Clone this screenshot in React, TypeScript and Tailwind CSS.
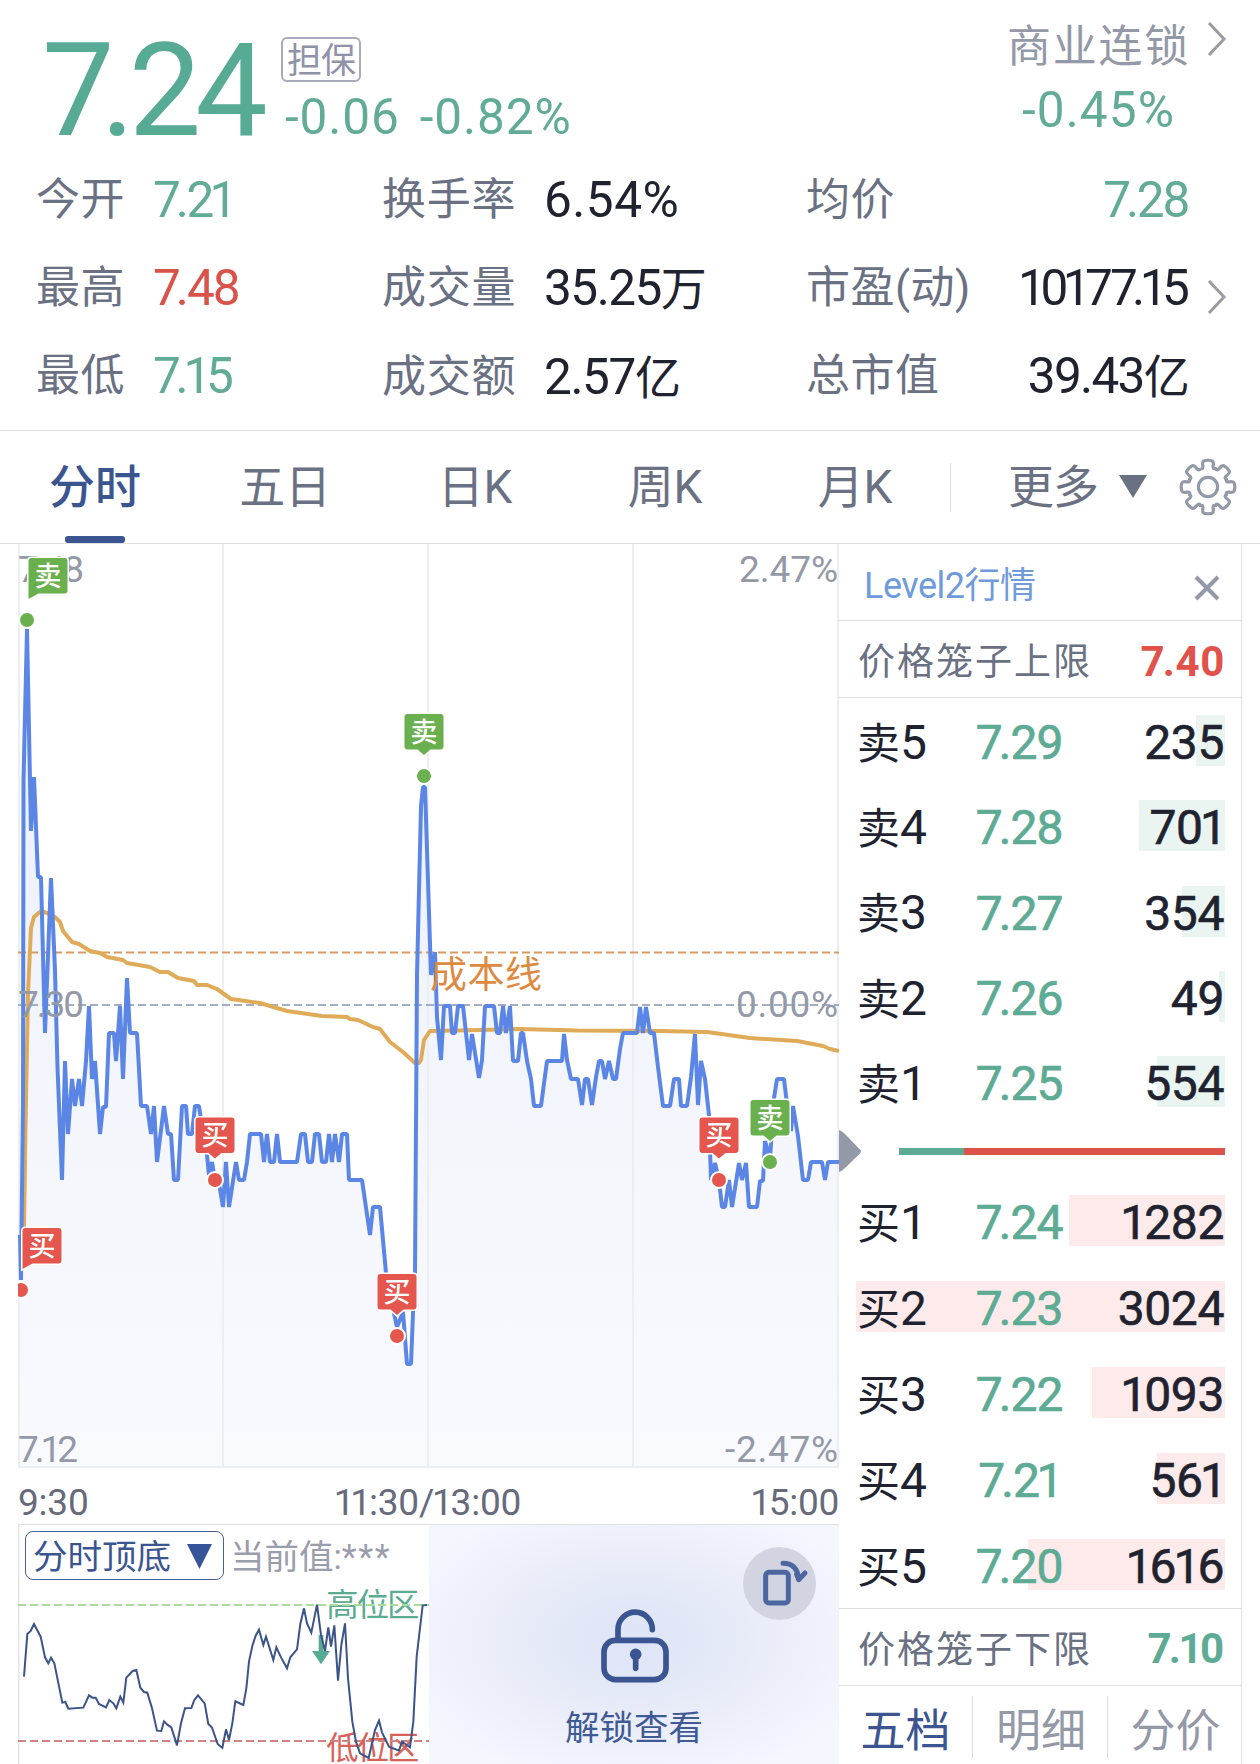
import React from "react";

type Side = "sell" | "buy";

interface Quote {
  label: string;
  price: string;
  volume: number;
}

interface Marker {
  side: Side;
  x: number;
  y: number;
  dotX: number;
  dotY: number;
  tail: "left" | "center";
}

const MAX_VOLUME = 3024;

const sells: Quote[] = [
  { label: "卖5", price: "7.29", volume: 235 },
  { label: "卖4", price: "7.28", volume: 701 },
  { label: "卖3", price: "7.27", volume: 354 },
  { label: "卖2", price: "7.26", volume: 49 },
  { label: "卖1", price: "7.25", volume: 554 },
];

const buys: Quote[] = [
  { label: "买1", price: "7.24", volume: 1282 },
  { label: "买2", price: "7.23", volume: 3024 },
  { label: "买3", price: "7.22", volume: 1093 },
  { label: "买4", price: "7.21", volume: 561 },
  { label: "买5", price: "7.20", volume: 1616 },
];

const tabs = ["分时", "五日", "日K", "周K", "月K"];

const markers: Marker[] = [
  { side: "sell", x: 28.5, y: 558, dotX: 27, dotY: 620, tail: "left" },
  { side: "buy", x: 22.5, y: 1228, dotX: 21, dotY: 1290, tail: "left" },
  { side: "buy", x: 195.5, y: 1117.5, dotX: 215, dotY: 1180, tail: "center" },
  { side: "buy", x: 377.5, y: 1274, dotX: 397, dotY: 1336, tail: "center" },
  { side: "sell", x: 404.5, y: 714, dotX: 424, dotY: 776, tail: "center" },
  { side: "buy", x: 699.5, y: 1117.5, dotX: 719, dotY: 1180, tail: "center" },
  { side: "sell", x: 750.5, y: 1100, dotX: 770, dotY: 1162, tail: "center" },
];

const priceLine =
  "20,1235 21,1280 23,1100 23.5,780 27,629 31,831 34,777 38,877 41,877 45,1033 51,878 55,970 57.5,1067 62,1180 65,1061 68,1134 72,1079 75,1106 79,1079 82,1106 86,1061 89,1006 92,1079 95,1061 100,1134 103,1107 106,1107 109,1033 114,1033 116,1061 120,1006 123,1079 127,978 130,1033 137,1033 141,1106 147,1106 151,1134 154,1106 157,1162 164,1106 168,1134 171,1134 174,1180 178,1180 182,1106 186,1106 188,1134 192,1134 195,1106 199,1106 203,1134 207,1155 209,1175 212,1162 215,1180 219,1183 223,1207 226,1162 229,1207 236,1162 239,1180 244,1180 247,1162 250,1134 261,1134 264,1162 267,1134 270,1162 274,1162 277,1134 280,1162 297,1162 301,1134 305,1134 308,1162 312,1162 315,1134 319,1134 322,1162 326,1162 329,1134 332,1162 335,1134 339,1162 342,1134 347,1134 349,1180 362,1180 370,1235 373,1207 380,1207 383,1240 386,1273 394,1313 397,1327 403,1312 407,1364 411,1364 413,1313 415,1273 417,975 421,806 423,787 425,787 431,975 435,952 437,1017 441,1060 444,1006 450,1006 452,1033 455,1033 458,1006 463,1006 469,1060 472,1034 479,1078 482,1060 485,1006 494,1006 497,1033 500,1033 503,1006 506,1033 510,1006 513,1061 518,1061 521,1033 523,1033 527,1061 531,1079 534,1106 541,1106 547,1061 562,1061 564,1034 567,1060 571,1079 578,1079 582,1105 585,1079 588,1079 592,1105 596,1077 599,1061 602,1061 605,1079 609,1061 613,1079 616,1079 620,1049 623,1033 637,1033 640,1007 643,1033 646,1007 650,1033 654,1033 658,1067 663,1106 670,1106 674,1079 679,1079 681,1106 687,1106 691,1077 695,1034 698,1105 701,1061 705,1079 709,1115 711,1180 715,1163 719,1180 722,1207 725,1207 729,1180 732,1207 739,1163 742,1180 746,1163 749,1207 757,1207 760,1181 763,1181 765,1141 770,1159 774,1098 777,1079 784,1079 787,1104 791,1131 793,1106 798,1136 803,1180 808,1180 811,1162 822,1162 825,1180 828,1162 839,1162";

const averageLine =
  "23,1235 24,1227 25.5,1127 28,993 31,928 34,917 41,911 47,913 55,917 60,922 63,931 72,942 79,944 90,951 100,953 107,957 123,960 127,963 150,967 160,972 168,972 178,978 194,981 197,985 207,985 217,989 231,999 260,1003 287,1011 322,1016 347,1017 350,1019 358,1020 373,1027 380,1029 390,1042 403,1052 415,1063 419,1063 421,1060 424,1040 430,1031 480,1030 520,1029 577,1030.6 660,1031 707,1032 750,1038 797,1041 823,1046 830,1049 839,1051";

const indicatorLine =
  "72,980 82,852 92,843 102,822 122,860 135,922 145,940 153,923 163,940 187,1058 196,1056 205,1076 250,1073 267,1036 277,1043 287,1043 297,1062 318,1072 328,1050 340,1060 349,1075 361,1040 370,1058 379,983 398,963 409,960 421,1013 432,1026 442,1028 456,1075 471,1142 484,1143 492,1114 502,1124 514,1132 531,1186 543,1120 555,1075 574,1074 583,1050 594,1036 614,1060 625,1122 636,1133 653,1182 667,1194 678,1138 687,1170 697,1120 706,1054 730,1065 739,1015 747,935 757,888 767,857 777,839 790,885 798,860 820,930 829,892 842,920 861,955 871,922 891,898 901,822 912,775 921,820 934,848 951,764 963,855 975,903 985,832 993,890 1003,826 1014,992 1024,885 1035,820 1044,985 1057,1115 1068,1175 1080,1210 1106,1224 1125,1140 1137,1112 1146,1147 1167,1190 1197,1202 1206,1175 1220,1185 1230,1192 1240,1115 1250,920 1268,766 1281,765";

// eight-toothed outline for the settings icon
const gearPath = Array.from({ length: 8 }, (_, i) => {
  const point = (deg: number, r: number) => {
    const a = ((i * 45 + deg) * Math.PI) / 180;
    return `${(30 + r * Math.sin(a)).toFixed(2)} ${(30 - r * Math.cos(a)).toFixed(2)}`;
  };
  const start = i === 0 ? `M${point(-22.5, 20)}` : "";
  return `${start} Q${point(-15, 18)} ${point(-13.5, 22)} C${point(-13, 27.5)} ${point(-7, 26.8)} ${point(0, 26.8)} C${point(7, 26.8)} ${point(13, 27.5)} ${point(13.5, 22)} Q${point(15, 18)} ${point(22.5, 20)}`;
}).join("");

function Chevron() {
  return (
    <svg width="20" height="36" viewBox="0 0 20 36" fill="none" stroke="#9b9ba1" strokeWidth="3">
      <path d="M2 2 L17 18 L2 34" />
    </svg>
  );
}

// Ones are set narrower than the other digits and the dot tucks under a seven
function Num({ value, className = "" }: { value: string; className?: string }) {
  return (
    <span className={className}>
      {value.split("").map((c, i) => {
        if (c === "1") {
          return (
            <span key={i} className="mx-[-0.055em]">
              1
            </span>
          );
        }
        if (c === "7" && value[i + 1] === ".") {
          return (
            <span key={i} className="mr-[-0.06em]">
              7
            </span>
          );
        }
        return c;
      })}
    </span>
  );
}

function QuoteHeader() {
  return (
    <header className="h-[431px] border-b border-[#dcdde0]">
      <div className="flex h-[156px] justify-between">
        <div className="flex pl-[42px]">
          <Num value="7.24" className="mt-[24.5px] h-[132px] w-[239px] text-[129px] leading-[132px] tracking-[-6px] text-[#57ab94]" />
          <div className="pt-[37px]">
            <div className="flex h-[45px] w-[80px] items-center justify-center rounded-md border-2 border-[#a9abbd] pt-[3px] text-[35px] leading-none tracking-[-1px] text-[#8f92a8]">
              担保
            </div>
            <div className="mt-[5px] ml-[4px] flex gap-[20px] text-[49.5px] leading-[60px] tracking-[0.9px] text-[#62ab97]">
              <span>-0.06</span>
              <span>-0.82%</span>
            </div>
          </div>
        </div>
        <div className="flex pt-[20px] pr-[33px]">
          <div className="w-[200px] text-right">
            <div className="pr-[19px] text-[44px] leading-[54px] tracking-[1.8px] whitespace-nowrap text-[#9499a8]">
              商业连锁
            </div>
            <div className="mt-[6px] pr-[32px] text-[49.5px] leading-[60px] tracking-[1.1px] text-[#62ab97]">-0.45%</div>
          </div>
          <div className="mt-[1px]">
            <Chevron />
          </div>
        </div>
      </div>

      <div className="grid grid-cols-[346px_424px_382px_1fr] pl-[36px] text-[49.5px] leading-[88px] text-[#20232f]">
        <div>
          <div className="flex">
            <span className="w-[117px] text-[44px] tracking-[0.5px] text-[#6a7183]">今开</span>
            <Num value="7.21" className="tracking-[-2.2px] text-[#62ab97]" />
          </div>
          <div className="flex">
            <span className="w-[117px] text-[44px] tracking-[0.5px] text-[#6a7183]">最高</span>
            <Num value="7.48" className="tracking-[-2px] text-[#d8534a]" />
          </div>
          <div className="flex">
            <span className="w-[117px] text-[44px] tracking-[0.5px] text-[#6a7183]">最低</span>
            <Num value="7.15" className="tracking-[-2.4px] text-[#62ab97]" />
          </div>
        </div>
        <div>
          <div className="flex">
            <span className="w-[162px] text-[44px] tracking-[0.7px] text-[#6a7183]">换手率</span>
            <span className="tracking-[0.5px]">6.54%</span>
          </div>
          <div className="flex">
            <span className="w-[162px] text-[44px] tracking-[0.7px] text-[#6a7183]">成交量</span>
            <span className="tracking-[-1.5px]">
              35.25<span className="text-[46px]">万</span>
            </span>
          </div>
          <div className="flex">
            <span className="w-[162px] text-[44px] tracking-[0.7px] text-[#6a7183]">成交额</span>
            <span className="tracking-[-1.4px]">
              2.57<span className="text-[46px]">亿</span>
            </span>
          </div>
        </div>
        <div>
          <div className="flex justify-between">
            <span className="text-[44px] tracking-[0.5px] text-[#6a7183]">均价</span>
            <Num value="7.28" className="tracking-[-2.2px] text-[#62ab97]" />
          </div>
          <div className="flex justify-between">
            <span className="text-[44px] tracking-[0.5px] text-[#6a7183]">市盈(动)</span>
            <Num value="10177.15" className="pr-px tracking-[-2.8px]" />
          </div>
          <div className="flex justify-between">
            <span className="text-[44px] tracking-[0.5px] text-[#6a7183]">总市值</span>
            <span className="tracking-[-1.7px]">
              39.43<span className="text-[46px]">亿</span>
            </span>
          </div>
        </div>
        <div className="pt-[123px] pl-[19px]">
          <Chevron />
        </div>
      </div>
    </header>
  );
}

function PeriodTabs() {
  return (
    <nav className="flex h-[113px] border-b border-[#dfe1e5] text-[46px] leading-[113px] text-[#6a7183]">
      {tabs.map((tab, i) => (
        <div key={tab} className="flex w-[190px] flex-col items-center">
          <span className={i === 0 ? "font-medium text-[#3a5590]" : "tracking-[-0.3px]"}>{tab}</span>
          {i === 0 && <span className="-mt-[8px] h-[7px] w-[60px] shrink-0 rounded-[3px] bg-[#3a5590]" />}
        </div>
      ))}
      <div className="mt-[32px] h-[49px] w-px bg-[#dddee2]" />
      <span className="ml-[57px] w-[92px] tracking-[-1px]">更多</span>
      <svg className="mt-[44px] ml-[19px]" width="28" height="24" viewBox="0 0 28 24">
        <path d="M0 0H28L14 23Z" fill="#6a7183" />
      </svg>
      <svg className="mt-[26px] ml-[31px]" width="60" height="60" viewBox="0 0 60 60" fill="none" stroke="#9499a8" strokeWidth="3.2">
        <path d={gearPath} strokeLinejoin="round" />
        <circle cx="30" cy="30" r="9.6" />
      </svg>
    </nav>
  );
}

function TradeMarker({ marker }: { marker: Marker }) {
  const { side, x, y, dotX, dotY, tail } = marker;
  const color = side === "sell" ? "#6bb04f" : "#e5564e";
  const outline =
    tail === "left"
      ? `M${x + 3} ${y}h33q3 0 3 3v29.500q0 3 -3 3h-26l-10 5.500v-38q0 -3 3 -3z`
      : `M${x + 3} ${y}h33q3 0 3 3v29.500q0 3 -3 3h-10l-6.500 5.500l-6.500 -5.500h-10q-3 0 -3 -3v-29.500q0 -3 3 -3z`;
  return (
    <g>
      <circle cx={dotX} cy={dotY} r="8" fill={color} stroke="#fff" strokeWidth="2" />
      <path d={outline} fill={color} stroke="#fff" strokeWidth="3" paintOrder="stroke" />
      <text x={x + 19.5} y={y + 27.5} textAnchor="middle" fontSize="27" fontWeight="500" fill="#fff">
        {side === "sell" ? "卖" : "买"}
      </text>
    </g>
  );
}

function TimeChart() {
  return (
    <svg width="821" height="924" viewBox="18 544 821 924" className="block">
      <defs>
        <linearGradient id="area" x1="0" y1="620" x2="0" y2="1467" gradientUnits="userSpaceOnUse">
          <stop offset="0" stopColor="#e9effc" />
          <stop offset="0.5" stopColor="#f3f5fc" />
          <stop offset="1" stopColor="#f8fafe" />
        </linearGradient>
      </defs>
      <polygon points={`19,1467 ${priceLine} 839,1467`} fill="url(#area)" />
      <g stroke="#edeef1" strokeWidth="2">
        <path d="M19 544V1467M223 544V1467M428 544V1467M633 544V1467M838 544V1467M18 1467H839" />
      </g>
      <g strokeWidth="2" strokeDasharray="8 4">
        <path d="M18 952.5H839" stroke="#d99a5e" />
        <path d="M18 1005H839" stroke="#a3aec2" />
      </g>
      <polyline points={averageLine} fill="none" stroke="#dfab58" strokeWidth="4" strokeLinejoin="round" />
      <polyline points={priceLine} fill="none" stroke="#5b86e5" strokeWidth="4" strokeLinejoin="bevel" />
      <g fontSize="37" fill="#9499a8">
        <text x="18" y="582" textLength="66">7.48</text>
        <text x="739" y="582" textLength="99">2.47%</text>
        <text x="18" y="1016.5" textLength="66">7.30</text>
        <text x="736" y="1016.5" textLength="102">0.00%</text>
        <text x="18" y="1462" textLength="60">7.12</text>
        <text x="725" y="1462" textLength="113">-2.47%</text>
      </g>
      <text x="430" y="988" fontSize="37" textLength="112" fill="#dd8a40">成本线</text>
      {markers.map((m) => (
        <TradeMarker key={`${m.x}-${m.y}`} marker={m} />
      ))}
    </svg>
  );
}

function IndicatorPanel() {
  return (
    <div className="relative w-[411px]">
      <svg width="411" height="240" viewBox="54 522 1233 720" className="-mt-px block">
        <path d="M56 522V1242" stroke="#e4e5ea" strokeWidth="5" />
        <g fontSize="97">
          <text x="979" y="799" fill="#5bab93" textLength="279">高位区</text>
          <text x="979" y="1227" fill="#d8625a" textLength="279">低位区</text>
        </g>
        <g strokeWidth="6" strokeDasharray="24 12">
          <path d="M54 765H1287" stroke="#a9dc98" />
          <path d="M54 1173H1287" stroke="#d08381" />
        </g>
        <path d="M956 855H970V903H990L963 943L936 903H956Z" fill="#57ab94" />
        <polyline points={indicatorLine} fill="none" stroke="#3c5488" strokeWidth="6" />
      </svg>
      <div className="absolute top-[6px] left-[7px] flex items-center">
        <div className="flex h-[49px] w-[199px] items-center rounded-lg border-[1.5px] border-[#45609a] pl-[7px] text-[34.5px] leading-none text-[#3a5590]">
          <span className="pt-[4px]">分时顶底</span>
          <svg className="ml-[16px]" width="26" height="26" viewBox="0 0 26 26">
            <path d="M0 1H25L12.500 26Z" fill="#37549a" />
          </svg>
        </div>
        <span className="ml-[6px] pt-[4px] text-[34.5px] leading-none whitespace-nowrap text-[#9a9dab]">
          当前值:<span className="tracking-[1.6px]">***</span>
        </span>
      </div>
    </div>
  );
}

function LockedPanel() {
  return (
    <div className="relative flex w-[410px] flex-col items-center bg-[radial-gradient(ellipse_at_50%_48%,#dde4f6_0%,#e7ebf8_38%,#f4f7fe_85%)] pt-[82px]">
      <svg className="ml-[2px]" width="70" height="78" viewBox="540 530 210 234" fill="none" stroke="#3b5593" strokeWidth="17" strokeLinecap="round">
        <rect x="552" y="630" width="186" height="118" rx="34" />
        <path d="M594 626V596A51 51 0 0 1 697 598" />
        <path d="M647 678V714" />
        <circle cx="647" cy="672" r="9" fill="#3b5593" />
      </svg>
      <span className="mt-[23px] text-[34.5px] leading-[40px] text-[#3f5a94]">解锁查看</span>
      <div className="absolute top-[22px] right-[23px] size-[73px] rounded-full bg-[#d2d4e1]">
        <svg width="73" height="73" viewBox="969 350 219 219" fill="none" stroke="#4c66a0" strokeWidth="15" strokeLinecap="round" strokeLinejoin="round">
          <rect x="1037" y="426" width="68" height="92" rx="10" />
          <path d="M1089 399C1118 399 1134 416 1136 448M1130 432L1136 448L1155 428" />
        </svg>
      </div>
    </div>
  );
}

function QuoteRow({ quote, side }: { quote: Quote; side: Side }) {
  const width = Math.max((quote.volume / MAX_VOLUME) * 369, 6);
  return (
    <div className={`relative flex items-center ${side === "sell" ? "h-[85.3px]" : "h-[86px]"}`}>
      <div
        className={`absolute right-0 h-[51px] ${side === "sell" ? "bg-[#eaf5f1]" : "bg-[#fcebea]"}`}
        style={{ width }}
      />
      <div className="relative flex w-full items-center pt-[5px] pr-[1px] pl-[2px] text-[48px] leading-[60px] text-[#20232f]">
        <span className="w-[92px] whitespace-nowrap">
          <span className="text-[43px]">{quote.label[0]}</span>
          {quote.label[1]}
        </span>
        <Num
          value={quote.price}
          className="w-[140px] text-center tracking-[-1px] text-[#5eab95] [-webkit-text-stroke:0.7px]"
        />
        <Num value={String(quote.volume)} className="flex-1 text-right tracking-[-0.4px] [-webkit-text-stroke:0.6px]" />
      </div>
    </div>
  );
}

function OrderBook() {
  return (
    <aside className="relative w-[403px] border-r border-[#dfe1e5]">
      <div className="flex h-[77px] items-center justify-between border-b border-[#dfe1e5] pr-[21px] pl-[25px]">
        <span className="pt-[7px] text-[36px] leading-[60px] tracking-[-0.5px] text-[#6f9bdd]">Level2行情</span>
        <svg className="mt-[11px]" width="26" height="26" viewBox="0 0 26 26" stroke="#9499a8" strokeWidth="4">
          <path d="M2 2L24 24M24 2L2 24" />
        </svg>
      </div>
      <div className="flex h-[77px] items-center justify-between border-b border-[#dfe1e5] pr-[16px] pl-[19px] leading-[60px]">
        <span className="pt-[8px] text-[37px] tracking-[2px] text-[#6a7183]">价格笼子上限</span>
        <Num value="7.40" className="pt-[5px] text-[42px] font-bold tracking-[0.6px] text-[#e0524a]" />
      </div>

      <div className="pr-[16px] pl-[16px]">
        {sells.map((q) => (
          <QuoteRow key={q.label} quote={q} side="sell" />
        ))}
        <div className="flex h-[53.5px] items-center pl-[44px]">
          <div className="h-[7px] w-[65px] bg-[#5eab95]" />
          <div className="h-[7px] flex-1 bg-[#dd5349]" />
        </div>
        {buys.map((q) => (
          <QuoteRow key={q.label} quote={q} side="buy" />
        ))}
      </div>

      <div className="flex h-[78px] items-center justify-between border-y border-[#dfe1e5] pr-[17px] pl-[19px] leading-[60px]">
        <span className="pt-[8px] text-[37px] tracking-[2px] text-[#6a7183]">价格笼子下限</span>
        <Num value="7.10" className="pt-[4px] text-[42px] font-bold tracking-[-0.2px] text-[#5eab95]" />
      </div>
      <div className="grid h-[90px] grid-cols-[133px_136px_134px] text-center text-[45px] text-[#9499a8]">
        <span className="pt-[16px] leading-[60px] text-[#3a5590]">五档</span>
        <span className="mt-[10px] h-[62px] border-x border-[#dcdde2] pt-[6px] pl-[2px] leading-[60px]">明细</span>
        <span className="pt-[16px] pl-[1px] leading-[60px]">分价</span>
      </div>

      <svg className="absolute top-[586px] left-0" width="23" height="43" viewBox="0 0 23 43">
        <path d="M0 0Q3 1 6 4L21 19.500Q23 21.500 21 23.500L6 38Q3 41 0 42Z" fill="#9499a8" />
      </svg>
    </aside>
  );
}

export default function App() {
  return (
    <div className="h-[1764px] w-[1260px] overflow-hidden bg-white font-[Roboto,'Noto_Sans_CJK_SC',sans-serif]">
      <QuoteHeader />
      <PeriodTabs />
      <main className="flex pl-[18px]">
        <div className="w-[821px]">
          <TimeChart />
          <div className="grid h-[56px] grid-cols-3 pt-[5px] text-[37px] leading-[60px] text-[#666a7b]">
            <span className="tracking-[-0.2px]">9:30</span>
            <Num value="11:30/13:00" className="text-center tracking-[-0.2px]" />
            <Num value="15:00" className="text-right tracking-[-0.3px]" />
          </div>
          <div className="flex h-[240px] border-t border-[#dfe1e5]">
            <IndicatorPanel />
            <LockedPanel />
          </div>
        </div>
        <OrderBook />
      </main>
    </div>
  );
}
